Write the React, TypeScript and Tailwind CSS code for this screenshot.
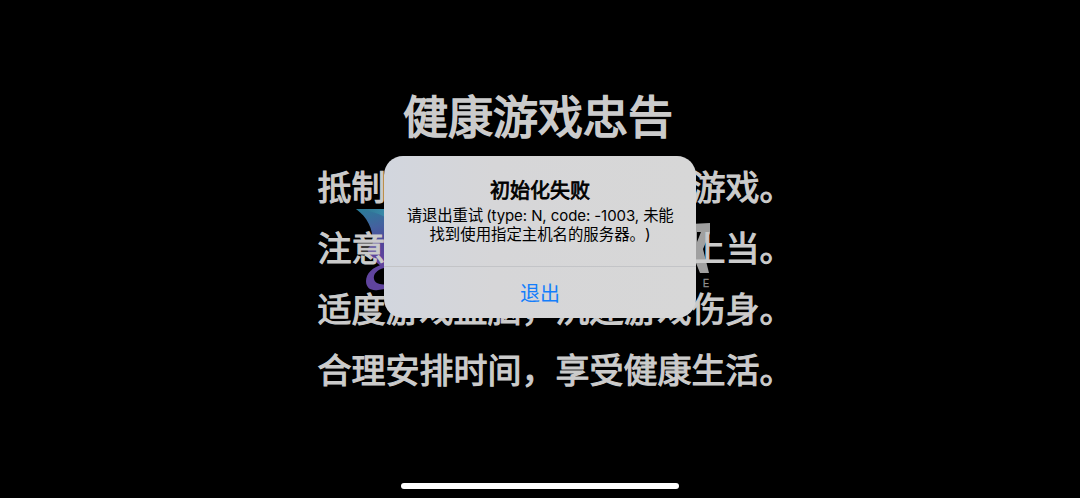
import React from "react";

const tips = [
  "抵制不良游戏，拒绝盗版游戏。",
  "注意自我保护，谨防受骗上当。",
  "适度游戏益脑，沉迷游戏伤身。",
  "合理安排时间，享受健康生活。",
];

function SplashLogo() {
  return (
    <svg className="absolute top-[200px] left-[350px]" width="370" height="96" viewBox="350 200 370 96">
      <defs>
        <linearGradient id="fox" gradientUnits="userSpaceOnUse" x1="364" y1="209" x2="378" y2="258">
          <stop offset="0" stopColor="#2b7c99" />
          <stop offset="0.4" stopColor="#44619f" />
          <stop offset="0.75" stopColor="#51459a" />
          <stop offset="1" stopColor="#60449e" />
        </linearGradient>
        <linearGradient id="crest" x1="0" y1="0" x2="1" y2="0">
          <stop offset="0" stopColor="#2b6f8c" />
          <stop offset="1" stopColor="#3c90b0" />
        </linearGradient>
      </defs>
      <path d="M356 209H392V272C382 268 372 261 367 249L373 243C373 228 367 217 356 209Z" fill="url(#fox)" />
      <path d="M356 209H392V221C380 213 368 210 356 209Z" fill="url(#crest)" />
      <path
        d="M384 264C372 267 366 274 366 281C366 288 371 291 378 290L392 288V283C382 286 375 284 374 279C373 274 377 270 384 268Z"
        fill="#60449e"
      />
      <path d="M690 224L710 223V233L703 249L709 273H700L694 258ZM697 232V242L701 232Z" fill="#a0a0a0" fillRule="evenodd" />
      <text x="703" y="287" fontSize="10.5" fill="#8e8e8e" stroke="#8e8e8e" strokeWidth="0.4" textLength="6" lengthAdjust="spacingAndGlyphs" fontFamily="Liberation Sans, sans-serif">
        E
      </text>
    </svg>
  );
}

function HealthNotice() {
  return (
    <div className="relative flex flex-col text-[#cbcbcb]">
      <h1 className="mt-[85px] ml-[403px] h-[66px] text-[45px] leading-[66px] whitespace-nowrap [-webkit-text-stroke:1.6px_#cbcbcb]">
        健康游戏忠告
      </h1>
      <div className="mt-[6px] ml-[317.5px] text-[34px] leading-[61px] whitespace-nowrap [-webkit-text-stroke:1.1px_#cbcbcb]">
        {tips.map((tip) => (
          <p key={tip}>{tip}</p>
        ))}
      </div>
    </div>
  );
}

function AlertDialog() {
  return (
    <div
      role="alertdialog"
      className="absolute top-[155.5px] left-[384px] flex h-[162.5px] w-[312px] flex-col overflow-hidden rounded-[19px] bg-[#d7d7d8] bg-linear-to-r from-[#d2d6de] via-[#d6d6d8] via-35% to-[#d7d7d7] text-center text-black"
    >
      <div className="h-[111.5px] border-b border-[#c3c4c7] pt-[22.5px]">
        <h2 className="text-[20px] leading-[26px] [-webkit-text-stroke:0.8px_#000]">初始化失败</h2>
        <p className="mt-[2px] text-[15.4px] leading-[19px] whitespace-nowrap [text-spacing-trim:space-all]">
          <span className="tracking-[-0.1px]">请退出重试</span>
          <span className="ml-[3px] text-[15px] tracking-[-0.08px]">(type: N, code: -1003, </span>
          <span className="tracking-[-0.3px]">未能</span>
          <br />
          找到使用指定主机名的服务器。)
        </p>
      </div>
      <button className="flex-1 pt-[2px] text-[20px] text-[#147efb]">退出</button>
    </div>
  );
}

export default function App() {
  return (
    <main className="relative h-[498px] w-[1080px] overflow-hidden bg-black font-['Inter','Noto_Sans_CJK_SC',sans-serif]">
      <SplashLogo />
      <HealthNotice />
      <AlertDialog />
      {/* Home indicator */}
      <div className="absolute bottom-[9px] left-[401px] h-[6px] w-[278px] rounded-full bg-white" />
    </main>
  );
}
